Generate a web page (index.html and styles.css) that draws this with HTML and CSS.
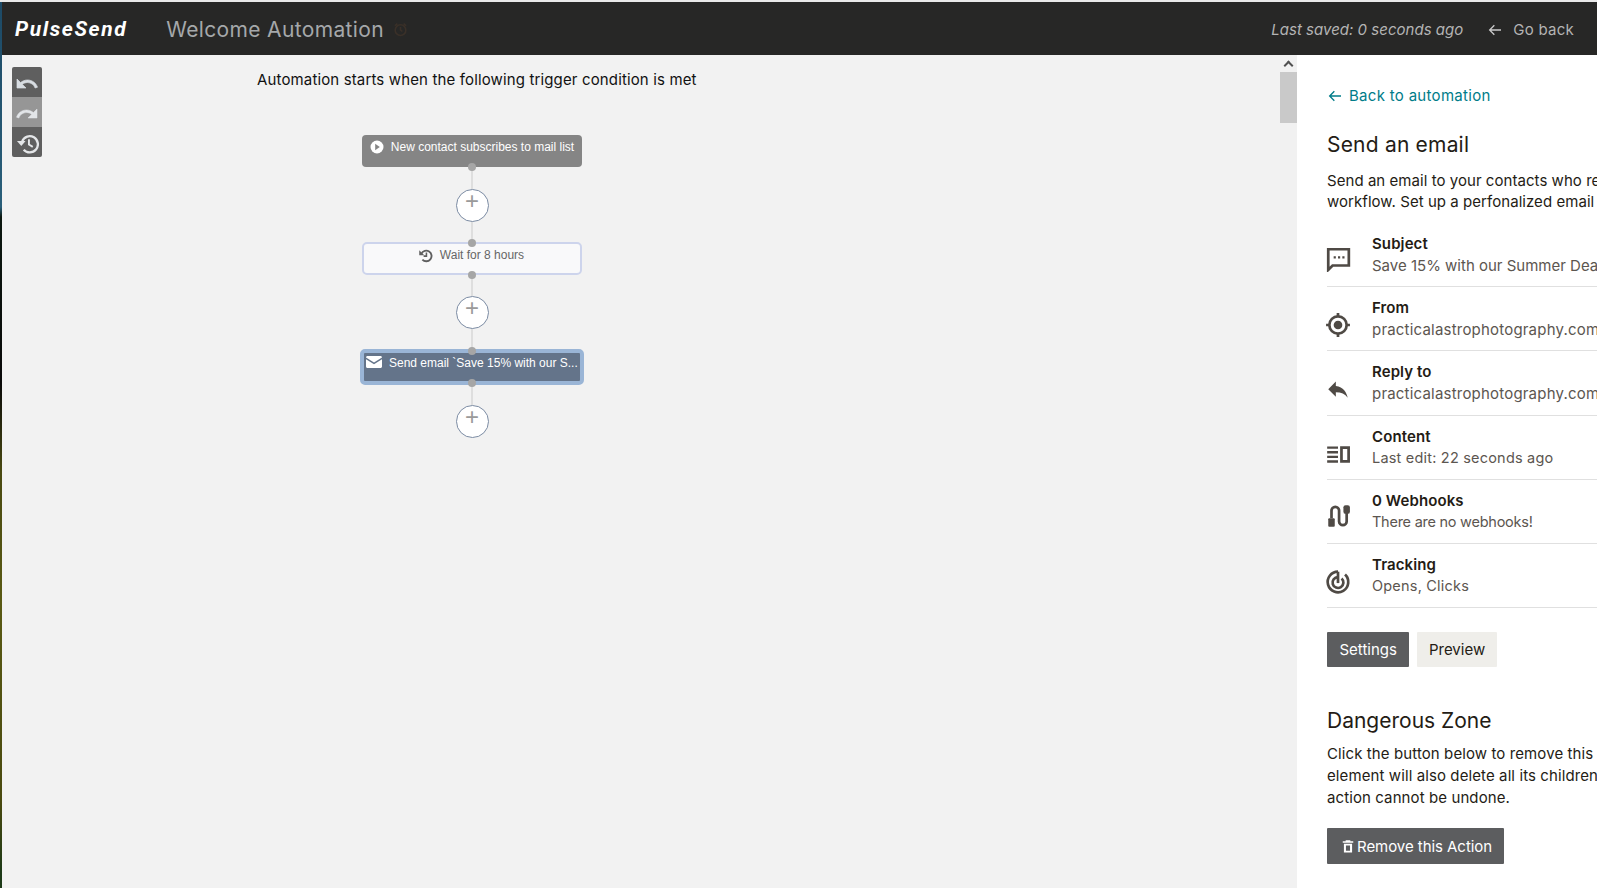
FILE: index.html
```html
<!DOCTYPE html>
<html>
<head>
<meta name="viewport" content="width=device-width, initial-scale=1">
<link rel="stylesheet" href="styles.css">
</head>
<body>

<div class="edge"></div>

<div class="page">
  <!-- Top bar -->
  <div class="topbar">
    <span class="logo">PulseSend</span>
    <span class="title">Welcome Automation</span>
    <svg class="clock" viewBox="0 0 24 24" width="15" height="15"><circle cx="12" cy="13" r="8.5" fill="none" stroke="#3a3028" stroke-width="2.5"/><path d="M12 8v5l3 2M3 6l4-3.500M21 6l-4-3.500" fill="none" stroke="#3a3028" stroke-width="2.500"/></svg>
    <span class="saved">Last saved: 0 seconds ago</span>
    <a class="goback">
      <svg viewBox="0 0 24 24" width="16" height="16"><path d="M21 12H4M11 5l-7 7 7 7" fill="none" stroke="#c9c9c9" stroke-width="2"/></svg>
      Go back
    </a>
  </div>

  <div class="main">
    <!-- Automation canvas -->
    <div class="canvas">
      <div class="tools">
        <span class="tool">
          <svg viewBox="0 0 24 24" width="24" height="24"><path d="M12.500 8c-2.650 0-5.050 1-6.900 2.600L2 7v9h9l-3.620-3.620c1.390-1.160 3.160-1.880 5.120-1.880 3.540 0 6.550 2.310 7.600 5.500l2.370-.78C21.080 11.030 17.150 8 12.500 8z" fill="#d8dde2" stroke="#d8dde2" stroke-width=".7"/></svg>
        </span>
        <span class="tool off">
          <svg viewBox="0 0 24 24" width="24" height="24"><path d="M18.400 10.600C16.550 9 14.150 8 11.500 8c-4.650 0-8.580 3.030-9.960 7.220L3.900 16c1.050-3.190 4.050-5.500 7.600-5.500 1.950 0 3.730.72 5.120 1.880L13 16h9V7z" fill="#e2e5e8" stroke="#e2e5e8" stroke-width=".5"/></svg>
        </span>
        <span class="tool">
          <svg viewBox="0 0 24 24" width="23" height="23"><path d="M6.500 9.500A8.500 8.500 0 1 1 8 18.500" fill="none" stroke="#e4e6e8" stroke-width="2.400"/><path d="M1 9.500l4.500 5 4.500-5z" fill="#e4e6e8"/><path d="M13.500 7.500v5.500l4 2.500" fill="none" stroke="#e4e6e8" stroke-width="2"/></svg>
        </span>
      </div>

      <div class="scrollbar">
        <span class="scroll-arrow"></span>
        <span class="scroll-thumb"></span>
      </div>

      <div class="flow-wrap">
        <p class="flow-title">Automation starts when the following trigger condition is met</p>

        <div class="flow">
          <div class="node trigger">
            <svg viewBox="0 0 14 14" width="14" height="14"><circle cx="7" cy="7" r="6.500" fill="#fff"/><path d="M5.200 3.800l4.600 3.200-4.600 3.200z" fill="#858585"/></svg>
            New contact subscribes to mail list
            <span class="dot bottom"></span>
          </div>
          <span class="line"></span>
          <span class="plus">+</span>
          <span class="line"></span>

          <div class="node wait">
            <span class="dot top"></span>
            <svg viewBox="0 0 24 24" width="15" height="15"><path d="M5.500 9A8.500 8.500 0 1 1 7 18.500" fill="none" stroke="#5f5f5f" stroke-width="3"/><path d="M2 3.500v8h8z" fill="#5f5f5f"/><path d="M13.500 7v6H9" fill="none" stroke="#5f5f5f" stroke-width="2.500"/></svg>
            Wait for 8 hours
            <span class="dot bottom"></span>
          </div>
          <span class="line"></span>
          <span class="plus">+</span>
          <span class="line"></span>

          <div class="node email">
            <span class="dot top"></span>
            <svg viewBox="0 0 16 12" width="16" height="12"><path d="M0 1.500C0 .7.700 0 1.500 0h13c.8 0 1.500.7 1.500 1.500L8 6.500zM0 3.300l8 5 8-5v7.200c0 .8-.7 1.500-1.500 1.500h-13C.7 12 0 11.300 0 10.500z" fill="#fff"/></svg>
            <span class="node-text">Send email `Save 15% with our S...</span>
            <span class="dot bottom"></span>
          </div>
          <span class="line"></span>
          <span class="plus">+</span>
        </div>
      </div>
    </div>

    <!-- Side panel -->
    <div class="panel">
      <a class="back">
        <svg viewBox="0 0 24 24" width="16" height="16"><path d="M21 12H4M11 5l-7 7 7 7" fill="none" stroke="#007c89" stroke-width="2"/></svg>
        Back to automation
      </a>

      <h3>Send an email</h3>
      <p class="desc">Send an email to your contacts who reach this point in the<br>workflow. Set up a perfonalized email to send them.</p>

      <ul class="settings">
        <li>
          <svg viewBox="0 0 24 24" width="26" height="26"><path d="M3 3h19v15H7l-4 4z" fill="none" stroke="#4f4a45" stroke-width="2.500"/><path d="M8 9.500h2v2H8zM12 9.500h2v2h-2zM16 9.500h2v2h-2z" fill="#4f4a45"/></svg>
          <div><b>Subject</b><span class="long subject-line">Save 15% with our Summer Deal</span></div>
        </li>
        <li>
          <svg class="low" viewBox="0 0 24 24" width="26" height="26"><circle cx="12" cy="12" r="8" fill="none" stroke="#4f4a45" stroke-width="2.500"/><circle cx="12" cy="12" r="4" fill="#4f4a45"/><path d="M12 1v3M12 20v3M1 12h3M20 12h3" stroke="#4f4a45" stroke-width="2.500"/></svg>
          <div><b>From</b><span class="long">practicalastrophotography.com</span></div>
        </li>
        <li>
          <svg viewBox="0 0 24 24" width="26" height="26"><path d="M10 11V7l-7 7 7 7v-4.100c5 0 8.500 1.600 11 5.100-1-5-4-10-11-11z" fill="#4f4a45"/></svg>
          <div><b>Reply to</b><span class="long">practicalastrophotography.com</span></div>
        </li>
        <li>
          <svg class="low" viewBox="0 0 24 24" width="26" height="26"><path d="M2 5h10v2.200H2zM2 9.300h10v2.200H2zM2 13.500h10v2.200H2zM2 17.800h10V20H2z" fill="#4f4a45"/><path d="M15.200 6.200h6.600v12.600h-6.600z" fill="none" stroke="#4f4a45" stroke-width="2.500"/></svg>
          <div><b>Content</b><span>Last edit: 22 seconds ago</span></div>
        </li>
        <li>
          <svg viewBox="0 0 24 24" width="26" height="26"><path d="M6 14V7a3.500 3.500 0 0 1 7 0v10a3.500 3.500 0 0 0 7 0V9" fill="none" stroke="#4f4a45" stroke-width="2.500"/><rect x="3" y="14" width="6" height="8" rx="1" fill="#4f4a45"/><rect x="17" y="2" width="6" height="8" rx="2" fill="#4f4a45"/></svg>
          <div><b>0 Webhooks</b><span class="tight">There are no webhooks!</span></div>
        </li>
        <li>
          <svg class="low" viewBox="0 0 24 24" width="26" height="26"><path d="M12 2.500a9.500 9.500 0 1 0 6.500 2.600" fill="none" stroke="#4f4a45" stroke-width="2.500"/><path d="M12 7.500a5 5 0 1 0 3.300 1.250" fill="none" stroke="#4f4a45" stroke-width="2.500"/><path d="M12 2.500V13" stroke="#4f4a45" stroke-width="2.500"/></svg>
          <div><b>Tracking</b><span>Opens, Clicks</span></div>
        </li>
      </ul>

      <div class="tabs">
        <a class="btn dark">Settings</a>
        <a class="btn light">Preview</a>
      </div>

      <h3 class="danger-title">Dangerous Zone</h3>
      <p class="danger-text">Click the button below to remove this action. Removing this<br>element will also delete all its children elements. This<br>action cannot be undone.</p>

      <a class="btn dark remove">
        <svg viewBox="0 0 24 24" width="14" height="14"><path d="M8 2h8v2h5v2.500H3V4h5zM5 8h14v15H5zM8.500 11v9h7v-9z" fill="#fff" fill-rule="evenodd"/></svg>
        Remove this Action
      </a>
    </div>
  </div>
</div>

</body>
</html>
```

FILE: styles.css
```css
html, body {
  height: 100%;
}

body {
  margin: 0;
  display: flex;
  overflow: hidden;
  background: #e9e9e9;
  font-family: Inter, "Open Sans", sans-serif;
}

* {
  box-sizing: border-box;
}

/* Sliver of the window behind this one */
.edge {
  width: 2px;
  margin-top: 2px;
  background: linear-gradient(#1d4a66 0, #2a5f7a 205px, #0c1810 215px, #0a0a0a 380px, #4a4a12 470px, #5a5a14 600px, #4a4a10 800px, #1e3a18 870px);
}

.page {
  flex: 1;
  min-width: 0;
  padding-top: 2px;
  display: flex;
  flex-direction: column;
}

/* Top bar */
.topbar {
  height: 53px;
  flex-shrink: 0;
  background: #272726;
  display: flex;
  align-items: center;
  padding: 1px 23px 0 13px;
}

.logo {
  font-family: Roboto, sans-serif;
  font-weight: 700;
  font-style: italic;
  font-size: 21px;
  letter-spacing: 1.6px;
  color: #fff;
  margin-right: 39px;
}

.title {
  font-size: 21px;
  letter-spacing: 0.35px;
  color: #a5a8aa;
  margin-right: 9px;
}

.saved {
  margin-left: auto;
  font-size: 15px;
  font-style: italic;
  letter-spacing: 0.02px;
  color: #b4b4b4;
}

.goback {
  margin: 1px 0 0 24px;
  font-size: 15px;
  letter-spacing: 0.25px;
  color: #b4b4b4;
  display: flex;
  align-items: center;
  gap: 10px;
}

/* Canvas */
.main {
  flex: 1;
  min-height: 0;
  display: flex;
}

.canvas {
  flex: 1;
  position: relative;
  background: #f2f2f2;
}

.tools {
  position: absolute;
  left: 10px;
  top: 12px;
  width: 30px;
  border-radius: 2px;
  overflow: hidden;
  background: #5f5f5f;
}

.tool {
  display: flex;
  align-items: center;
  justify-content: center;
  height: 30px;
  padding-top: 3px;
}

.tool.off {
  background: #969696;
}

.scrollbar {
  position: absolute;
  right: 0;
  top: 0;
  bottom: 0;
  width: 17px;
  background: #f1f1f1;
}

.scroll-arrow {
  display: block;
  height: 17px;
  position: relative;
}

.scroll-arrow::before {
  content: '';
  position: absolute;
  left: 5px;
  top: 7px;
  width: 5px;
  height: 5px;
  border-left: 2px solid #505050;
  border-top: 2px solid #505050;
  transform: rotate(45deg);
}

.scroll-thumb {
  display: block;
  height: 51px;
  background: #c9c9c9;
}

.flow-wrap {
  margin-left: 238px;
  width: 486px;
  padding-top: 15px;
}

.flow-title {
  margin: 0;
  padding-left: 17px;
  font-size: 15px;
  line-height: 20px;
  letter-spacing: 0.14px;
  color: #111;
}

.flow {
  width: 224px;
  margin: 45px 0 0 120px;
  display: flex;
  flex-direction: column;
  align-items: center;
}

.node {
  position: relative;
  width: 220px;
  height: 32px;
  flex-shrink: 0;
  border-radius: 4px;
  display: flex;
  justify-content: center;
  gap: 7px;
  padding-top: 4px;
  font-family: "Liberation Sans", Arial, sans-serif;
  font-size: 12px;
  line-height: 16px;
}

.node svg {
  flex-shrink: 0;
  margin-top: 1px;
}

.trigger {
  background: #858585;
  color: #fff;
  margin-bottom: 1px;
}

.wait {
  height: 33px;
  background: #f9f9fa;
  border: 2px solid #cdd4ec;
  border-radius: 5px;
  color: #666;
  padding: 3px 2px 0 0;
}

.email {
  width: 224px;
  height: 36px;
  background: #64748a;
  border: 4px solid #9ab5d6;
  border-radius: 5px;
  color: #fff;
  justify-content: flex-start;
  padding: 2px 0 0 2px;
  margin-bottom: -1px;
}

.dot {
  position: absolute;
  left: 50%;
  width: 8px;
  height: 8px;
  margin-left: -4px;
  border-radius: 50%;
  background: #a6a6a6;
}

.dot.top {
  top: -4px;
}

.dot.bottom {
  bottom: -4px;
}

.email .dot.top {
  top: -6px;
}

.email .dot.bottom {
  bottom: -6px;
}

.wait .dot.top {
  top: -5px;
}

.wait .dot.bottom {
  bottom: -6px;
}

.line {
  width: 2px;
  height: 21px;
  flex-shrink: 0;
  background: #dedede;
}

.plus {
  position: relative;
  width: 33px;
  height: 33px;
  margin-bottom: -1px;
  flex-shrink: 0;
  border-radius: 50%;
  border: 1px solid #7b8ba3;
  background: #fff;
  color: #9a9a9a;
  font-family: "Liberation Sans", Arial, sans-serif;
  font-size: 24px;
  line-height: 21px;
  text-align: center;
}

/* Side panel */
.panel {
  width: 300px;
  flex-shrink: 0;
  background: #fff;
  padding: 31px 0 0 30px;
  overflow: hidden;
  white-space: nowrap;
}

.back {
  display: flex;
  align-items: center;
  gap: 6px;
  font-size: 15px;
  line-height: 20px;
  letter-spacing: 0.3px;
  color: #007c89;
}

h3 {
  margin: 0;
  font-weight: 400;
  font-size: 21px;
  line-height: 28px;
  letter-spacing: 0.2px;
  color: #241c15;
}

.panel h3:first-of-type {
  margin-top: 25px;
}

.desc, .danger-text {
  margin: 0;
  font-size: 15px;
  color: #241c15;
}

.desc {
  margin-top: 11px;
  line-height: 21px;
  letter-spacing: 0.05px;
}

.settings {
  margin: 11px 0 0;
  padding: 0;
  list-style-type: none;
}

.settings li {
  height: 64px;
  padding-top: 8px;
  border-bottom: 1px solid #e0e0e0;
  display: flex;
  align-items: center;
  gap: 21px;
}

.settings li:nth-child(3) {
  height: 65px;
}

.settings li svg {
  flex-shrink: 0;
  margin-left: -2px;
}

.settings li svg.low {
  margin-top: 4px;
}

.settings div {
  padding-bottom: 9px;
}

.settings b, .settings span {
  display: block;
  font-size: 14.500px;
  line-height: 21px;
}

.settings b {
  font-size: 15px;
  font-weight: 600;
  letter-spacing: 0.1px;
  color: #241c15;
}

.settings span {
  color: #5c5650;
  letter-spacing: 0.2px;
}

.settings span.long {
  font-size: 15px;
  padding-top: 1px;
}

.settings span.subject-line {
  letter-spacing: 0;
}

.settings span.tight {
  letter-spacing: -0.25px;
}

.tabs {
  display: flex;
  gap: 8px;
  margin-top: 24px;
}

.btn {
  display: inline-flex;
  align-items: center;
  height: 35px;
  padding: 0 12px;
  border-radius: 1px;
  font-size: 15px;
}

.tabs .dark {
  padding: 0 12.500px;
}

.tabs .light {
  padding: 0 11.500px;
}

.dark {
  background: #5c5d5f;
  color: #fff;
}

.light {
  background: #efeeea;
  color: #241c15;
}

.panel .danger-title {
  margin-top: 40px;
  letter-spacing: 0;
}

.danger-text {
  margin-top: 8px;
  line-height: 22px;
  letter-spacing: 0.1px;
}

.remove {
  margin-top: 19px;
  height: 36px;
  padding: 0 12px 0 14px;
  gap: 2px;
  letter-spacing: -0.05px;
}
```
